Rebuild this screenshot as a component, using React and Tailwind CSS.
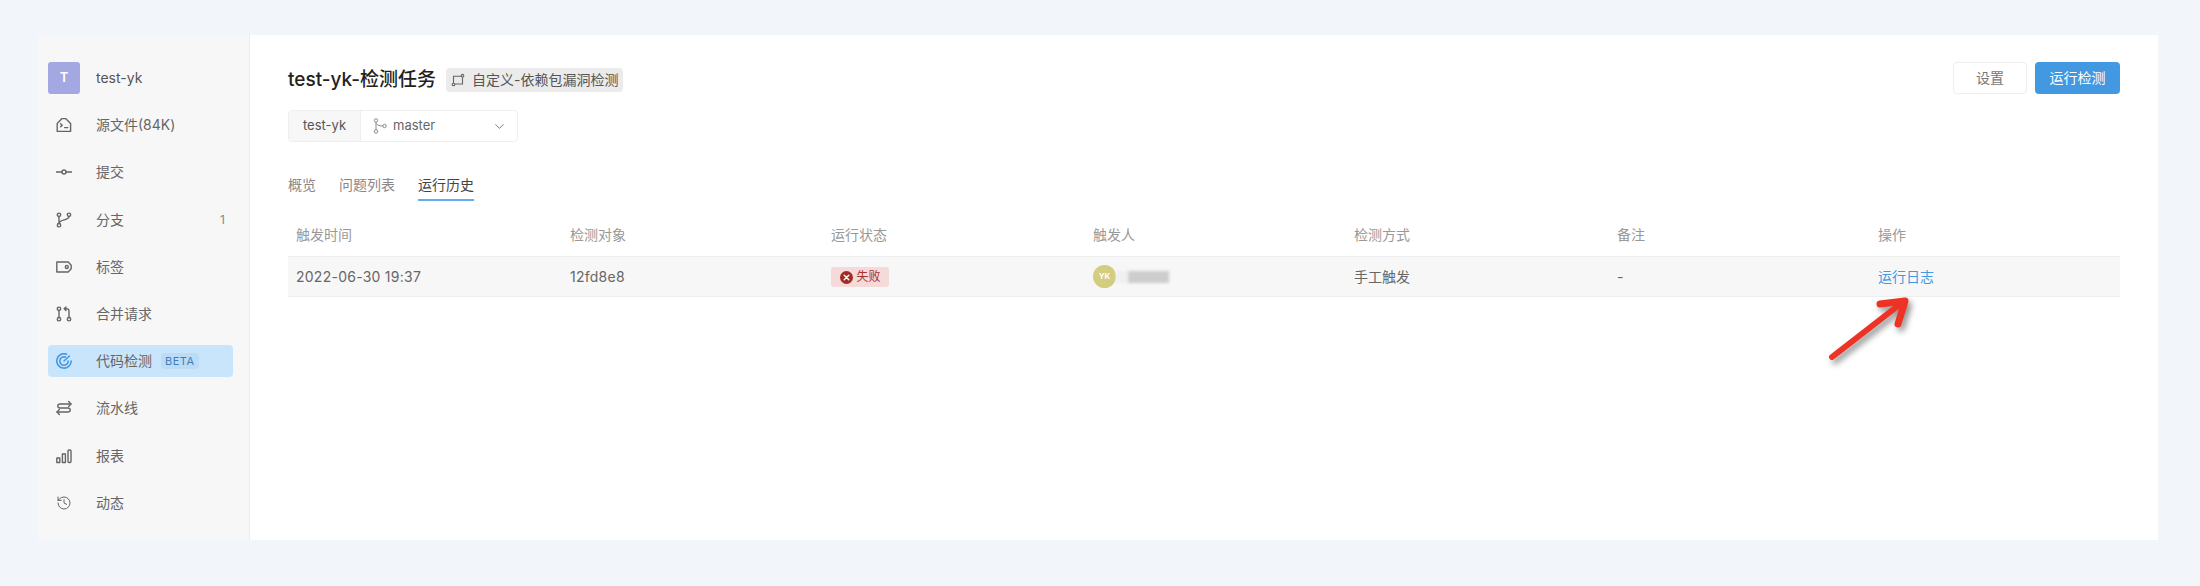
import { ChevronDown, History } from "lucide-react";

const FONT = "font-['Inter','Noto_Sans_CJK_SC',sans-serif]";

// --- sidebar icons ---
const Svg = ({ children, className = "text-[#666]" }) => (
  <svg width="16" height="16" viewBox="0 0 16 16" fill="none" stroke="currentColor" strokeWidth="1.4" strokeLinecap="round" strokeLinejoin="round" className={className}>
    {children}
  </svg>
);

const RepoIcon = () => (
  <Svg>
    <path d="M1.2 6.6 6 1.6h3.6l5 5v7.8H1.2z" />
    <path d="M4.6 6.8 6.2 8.3 4.6 9.8M8.6 10.6h3.2" />
  </Svg>
);
const CommitIcon = () => (
  <Svg>
    <circle cx="8" cy="8" r="2" />
    <path d="M0.2 8H6M10 8h5.8" />
  </Svg>
);
const BranchIcon = () => (
  <Svg>
    <circle cx="3" cy="2.8" r="1.7" />
    <circle cx="3" cy="13.2" r="1.7" />
    <circle cx="13" cy="2.8" r="1.7" />
    <path d="M3 4.5v7M13 4.5c0 4.4-9.4 2.2-10 7" />
  </Svg>
);
const TagIcon = () => (
  <Svg>
    <path d="M0.8 3h11.4l3 3.2v3.6l-3 3.2H0.8z" />
    <circle cx="10.8" cy="8" r="1.5" />
  </Svg>
);
const MergeIcon = () => (
  <Svg>
    <circle cx="3" cy="2.8" r="1.7" />
    <circle cx="3" cy="13.2" r="1.7" />
    <circle cx="13" cy="13.2" r="1.7" />
    <path d="M3 4.5v7M13 11.5V5c0-1.5-1-2.2-2.4-2.2H8.4M10 1 8.2 2.8 10 4.6" />
  </Svg>
);
const ScanIcon = () => (
  <Svg className="text-[#4299e1]">
    <path d="M10.6 1.2A7.2 7.2 0 1 0 15.2 8" strokeWidth="1.6" />
    <path d="M9.4 4.1A4.2 4.2 0 1 0 12.2 8" strokeWidth="1.6" />
    <path d="M8 8 13.4 3" strokeWidth="1.6" />
  </Svg>
);
const PipelineIcon = () => (
  <Svg>
    <path d="M15 4H4.2C1 4 1 8 4.2 8h7.6c3.2 0 3.2 4 0 4H1" />
    <path d="M12.6 1.6 15 4l-2.4 2.4M3.4 9.6 1 12l2.4 2.4" />
  </Svg>
);
const ReportIcon = () => (
  <Svg>
    <rect x="0.8" y="10" width="3" height="4.5" />
    <rect x="6.4" y="6" width="3" height="8.5" />
    <rect x="12" y="2" width="3" height="12.5" rx="1" />
  </Svg>
);
const TaskTagIcon = () => (
  <svg width="14" height="14" viewBox="0 0 14 14" fill="none" stroke="#666" strokeWidth="1.1" className="shrink-0">
    <path d="M2.5 10V3.2h8M11.5 4.5V11H4" />
    <circle cx="2.5" cy="11.5" r="1.3" />
    <circle cx="11.5" cy="2.7" r="1.3" />
  </svg>
);
const MasterIcon = () => (
  <svg width="14" height="16" viewBox="0 0 14 16" fill="none" stroke="#888" strokeWidth="1">
    <circle cx="3" cy="2.5" r="1.7" />
    <circle cx="3" cy="13.5" r="1.7" />
    <circle cx="11.5" cy="8" r="1.7" />
    <path d="M3 4.2v7.6M3.4 5.5C4.4 7.4 7 8 9.8 8" />
  </svg>
);

const navItems = [
  { label: "源文件(84K)", icon: <RepoIcon /> },
  { label: "提交", icon: <CommitIcon /> },
  { label: "分支", icon: <BranchIcon />, count: 1 },
  { label: "标签", icon: <TagIcon /> },
  { label: "合并请求", icon: <MergeIcon /> },
  { label: "代码检测", icon: <ScanIcon />, active: true, badge: "BETA" },
  { label: "流水线", icon: <PipelineIcon /> },
  { label: "报表", icon: <ReportIcon /> },
  { label: "动态", icon: <History size={16} strokeWidth={1.5} className="text-[#666]" /> },
];

const headers = ["触发时间", "检测对象", "运行状态", "触发人", "检测方式", "备注", "操作"];
const GRID = "grid grid-cols-[274px_261px_262px_261px_263px_261px_1fr] px-2";

const Sidebar = () => (
  <aside className="w-[212px] shrink-0 bg-[#f7f7f7] border-r border-[#ececec] pl-[10px] pr-[16px] pt-[27px] flex flex-col gap-[15.2px]">
    <div className="flex items-center h-8 gap-[16px]">
      <div className="w-8 h-8 rounded-[3px] bg-[#a3a8e3] text-white text-[13px] font-semibold flex items-center justify-center">T</div>
      <span className="text-sm text-[#555]">test-yk</span>
    </div>
    {navItems.map((item) => (
      <div
        key={item.label}
        className={`flex items-center h-8 pl-2 pr-2 rounded-[4px] ${item.active ? "bg-[#c9e5fc]" : ""}`}
      >
        <span className="w-[40px] shrink-0 flex items-center">{item.icon}</span>
        <span className="text-sm text-[#666]">{item.label}</span>
        {item.badge && (
          <span className="ml-[9px] h-[16px] px-[4px] rounded-[3px] bg-[#bcdcf6] text-[#3f7fb8] text-[11px] tracking-[0.5px] flex items-center">{item.badge}</span>
        )}
        {item.count && <span className="ml-auto text-xs text-[#888]">{item.count}</span>}
      </div>
    ))}
  </aside>
);

const Header = () => (
  <div className="flex items-start justify-between">
    <div>
      <div className="flex items-center h-[36px]">
        <h1 className="text-[19px] font-medium text-[#222]">test-yk-检测任务</h1>
        <span className="ml-[10px] h-[24px] pl-[5px] pr-[4px] rounded-[4px] bg-[#ebebeb] text-sm text-[#555] flex items-center gap-[7px]">
          <TaskTagIcon />
          自定义-依赖包漏洞检测
        </span>
      </div>
      <div className="mt-[12px] flex w-[230px] h-[32px] rounded-[4px] border border-[#eeeeee] text-[13px]">
        <span className="w-[72px] bg-[#f7f7f7] border-r border-[#eeeeee] text-[#555] flex items-center justify-center rounded-l-[4px]">test-yk</span>
        <span className="flex-1 flex items-center pl-[12px] pr-[10px] text-[#666] gap-[6px]">
          <MasterIcon />
          master
          <ChevronDown size={15} strokeWidth={1.4} className="ml-auto text-[#666]" />
        </span>
      </div>
    </div>
    <div className="flex gap-2">
      <button className="w-[74px] h-8 rounded-[4px] border border-[#eeeeee] bg-white text-sm text-[#777]">设置</button>
      <button className="w-[85px] h-8 rounded-[4px] bg-[#4299e1] text-sm text-white">运行检测</button>
    </div>
  </div>
);

const Tabs = () => (
  <div className="mt-[29px] flex gap-[23px] text-sm text-[#888]">
    <span className="h-[30px] pt-[4px]">概览</span>
    <span className="h-[30px] pt-[4px]">问题列表</span>
    <span className="h-[30px] pt-[4px] text-[#444] border-b-2 border-[#63aef0]">运行历史</span>
  </div>
);

const Table = () => (
  <div className="mt-[13px]">
    <div className={`${GRID} h-[42px] items-center text-sm text-[#999]`}>
      {headers.map((h) => <span key={h}>{h}</span>)}
    </div>
    <div className={`${GRID} h-[41px] items-center bg-[#f7f7f7] border-y border-[#efefef] text-sm text-[#666]`}>
      <span className="tracking-[0.25px]">2022-06-30 19:37</span>
      <span className="tracking-[0.25px]">12fd8e8</span>
      <span>
        <span className="inline-flex items-center h-5 px-[8.5px] gap-[4px] rounded-[3px] bg-[#f6d9d9] text-[#a5332b] text-xs">
          <span className="w-[13px] h-[13px] rounded-full bg-[#a12b22] text-white flex items-center justify-center">
            <svg width="7" height="7" viewBox="0 0 7 7" stroke="currentColor" strokeWidth="1.4" strokeLinecap="round"><path d="M1.2 1.2l4.6 4.6M5.8 1.2 1.2 5.8" /></svg>
          </span>
          失败
        </span>
      </span>
      <span className="flex items-center">
        <span className="w-[23px] h-[23px] rounded-full bg-[#d2cd7f] text-white text-[8px] font-bold flex items-center justify-center">YK</span>
        <span className="w-3 h-3 bg-[#f0f0f0] blur-[1px]" />
        <span className="w-[41px] h-3 bg-[#cdcdcd] blur-[1.5px]" />
      </span>
      <span>手工触发</span>
      <span>-</span>
      <span className="text-[#4299e1]">运行日志</span>
    </div>
  </div>
);

export default function App() {
  return (
    <div className={`h-[586px] bg-[#f2f6fb] pt-[35px] pb-[46px] pl-[38px] pr-[42px] ${FONT}`}>
      <div className="relative h-full flex bg-white">
        <Sidebar />
        <main className="flex-1 px-[38px] pt-[27px]">
          <Header />
          <Tabs />
          <Table />
        </main>
        {/* annotation arrow drawn over the table */}
        <svg className="absolute left-[1783px] top-[240px] drop-shadow-[3px_4px_3px_rgba(0,0,0,0.45)]" width="100" height="90" viewBox="0 0 100 90" fill="none" stroke="#ee3224" strokeLinecap="round" strokeLinejoin="round">
          <path d="M11 82 78 30" strokeWidth="6" />
          <path d="M59 29 84 26 77 49" strokeWidth="7" />
        </svg>
      </div>
    </div>
  );
}
